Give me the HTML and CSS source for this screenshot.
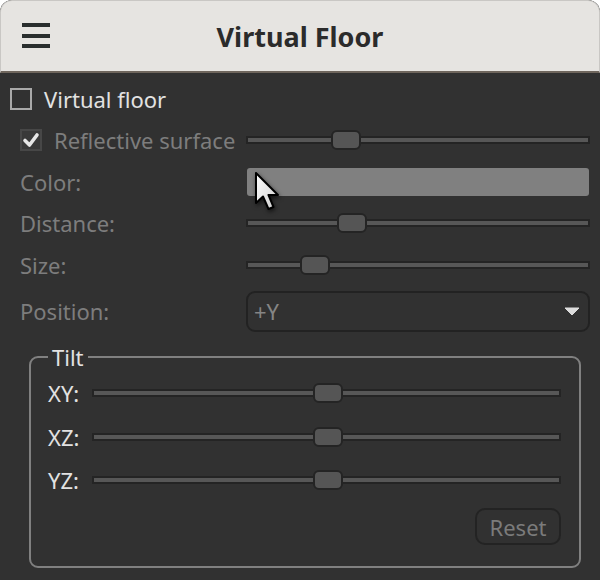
FILE: index.html
```html
<!DOCTYPE html>
<html>
<head>
<meta charset="utf-8">
<link rel="stylesheet" href="styles.css">
</head>
<body>
<div class="window">
  <header class="titlebar">
    <button class="menu" aria-label="Menu"><span></span><span></span><span></span></button>
    <h1 class="title">Virtual Floor</h1>
  </header>
  <main class="content">
    <label class="row-top"><span class="check"></span><span class="bright">Virtual floor</span></label>
    <div class="form">
      <div class="cell r2 check-label"><span class="check check-on"><svg viewBox="0 0 22 22" width="22" height="22"><path d="M5 11.5 L9.5 16 L17 6" fill="none" stroke="#e6e6e6" stroke-width="3.6" stroke-linecap="round" stroke-linejoin="round"/></svg></span><span class="dim">Reflective surface</span></div>
      <div class="cell r2"><div class="slider"><div class="track"></div><div class="thumb" style="--v:0.27"></div></div></div>

      <div class="cell r3 dim">Color:</div>
      <div class="cell r3"><div class="swatch"></div></div>

      <div class="cell r4 dim">Distance:</div>
      <div class="cell r4"><div class="slider"><div class="track"></div><div class="thumb" style="--v:0.29"></div></div></div>

      <div class="cell r5 dim">Size:</div>
      <div class="cell r5"><div class="slider"><div class="track"></div><div class="thumb" style="--v:0.172"></div></div></div>

      <div class="cell r6 dim">Position:</div>
      <div class="cell r6"><div class="combo"><span class="combo-text">+Y</span><svg class="arrow" viewBox="0 0 16 9" width="16" height="9"><path d="M1 1 H15 L8 8 Z" fill="#dcdcdc" stroke="#dcdcdc" stroke-width="1" stroke-linejoin="round"/></svg></div></div>
    </div>
    <fieldset class="tilt">
      <legend>Tilt</legend>
      <div class="tilt-grid">
        <div class="cell t1 bright">XY:</div>
        <div class="cell t1"><div class="slider"><div class="track"></div><div class="thumb" style="--v:0.503"></div></div></div>
        <div class="cell t2 bright">XZ:</div>
        <div class="cell t2"><div class="slider"><div class="track"></div><div class="thumb" style="--v:0.503"></div></div></div>
        <div class="cell t3 bright">YZ:</div>
        <div class="cell t3"><div class="slider"><div class="track"></div><div class="thumb" style="--v:0.503"></div></div></div>
      </div>
      <div class="actions"><button class="reset">Reset</button></div>
    </fieldset>
  </main>
  <svg class="cursor" viewBox="0 0 30 44" width="30" height="44">
    <defs>
      <linearGradient id="cg" x1="0" y1="0" x2="1" y2="1">
        <stop offset="0" stop-color="#ffffff"/>
        <stop offset="1" stop-color="#cfcfcf"/>
      </linearGradient>
    </defs>
    <path d="M2 2 L2 32 L9 25.5 L14.5 38 L19.5 36 L14.5 24 L24 24 Z" fill="url(#cg)" stroke="#000" stroke-width="2" stroke-linejoin="round"/>
  </svg>
</div>
</body>
</html>
```

FILE: styles.css
```css
* { box-sizing: border-box; }
html, body { margin: 0; padding: 0; background: #ffffff; }
body { font-family: "Noto Sans", "Open Sans", sans-serif; }

.window {
  position: relative;
  width: 600px;
  height: 580px;
  background: #313131;
  border-radius: 12px 12px 0 0;
  overflow: hidden;
}

.titlebar {
  height: 73px;
  background: #e6e4e1;
  border: 1px solid #c9c7c4;
  border-bottom: 2px solid #6f665d;
  border-radius: 12px 12px 0 0;
  display: flex;
  align-items: center;
  position: relative;
}

.menu {
  width: 28px;
  height: 25px;
  margin-left: 21px;
  margin-top: -1px;
  padding: 0;
  border: none;
  background: transparent;
  display: flex;
  flex-direction: column;
  justify-content: space-between;
}
.menu span {
  display: block;
  height: 4px;
  width: 28px;
  background: #2a2e2e;
}

.title {
  flex: 1;
  margin: 0 0 0 -49px;
  text-align: center;
  font-size: 27px;
  font-weight: 700;
  color: #2b2b2b;
  line-height: 1;
}

.content {
  padding: 6px 10px 0 10px;
  font-size: 22px;
}

.bright { color: #e2e2e2; }
.dim { color: #7d7d7d; }

.row-top {
  height: 40px;
  display: flex;
  align-items: center;
}

.check {
  width: 22px;
  height: 22px;
  border: 2px solid #a9a9a9;
  margin-right: 12px;
  display: inline-flex;
  flex: none;
}
.check-on {
  border-color: #474747;
  background: #393939;
  margin-right: 12px;
}
.check-on svg { margin: -2px; }

.form {
  padding-left: 10px;
  display: grid;
  grid-template-columns: 226px 1fr;
  grid-template-rows: 42px 41px 41px 44px 48px;
}
.cell {
  display: flex;
  align-items: center;
}

.slider {
  position: relative;
  width: 100%;
  height: 20px;
  display: flex;
  align-items: center;
}
.track {
  width: 100%;
  height: 8px;
  background: #575757;
  border: 2px solid #242424;
}
.thumb {
  position: absolute;
  top: 0;
  left: calc(var(--v) * (100% - 30px));
  width: 30px;
  height: 20px;
  background: #555555;
  border: 2px solid #242424;
  border-radius: 6px;
}

.swatch {
  width: 100%;
  height: 28px;
  margin-left: 1px;
  margin-right: 1px;
  background: #808080;
  border-radius: 3px;
}

.combo {
  width: 100%;
  height: 41px;
  border: 2px solid #222222;
  border-radius: 9px;
  display: flex;
  align-items: center;
  justify-content: space-between;
  padding: 0 8px 0 6px;
  color: #858585;
}
.arrow { margin-top: 1px; }

.tilt {
  margin: 8px 9px 0 19px;
  border: 2px solid #808080;
  border-radius: 9px;
  padding: 0 18px 21px 17px;
  min-width: 0;
}
.tilt legend {
  padding: 0 4px;
  margin-left: 0;
  color: #e2e2e2;
  line-height: 28px;
}
.tilt-grid {
  display: grid;
  grid-template-columns: 44px 1fr;
  grid-template-rows: 44px 43px 44px;
}
.actions {
  display: flex;
  justify-content: flex-end;
  margin-top: 6px;
}
.reset {
  width: 86px;
  height: 37px;
  border: 2px solid #232323;
  border-radius: 10px;
  background: #313131;
  color: #7b7b7b;
  font-family: "Noto Sans", "Open Sans", sans-serif;
  font-size: 22px;
  padding: 0;
  line-height: 1;
}

.cursor {
  position: absolute;
  left: 254px;
  top: 171px;
  filter: drop-shadow(1px 2px 2px rgba(0,0,0,0.6));
}
```
